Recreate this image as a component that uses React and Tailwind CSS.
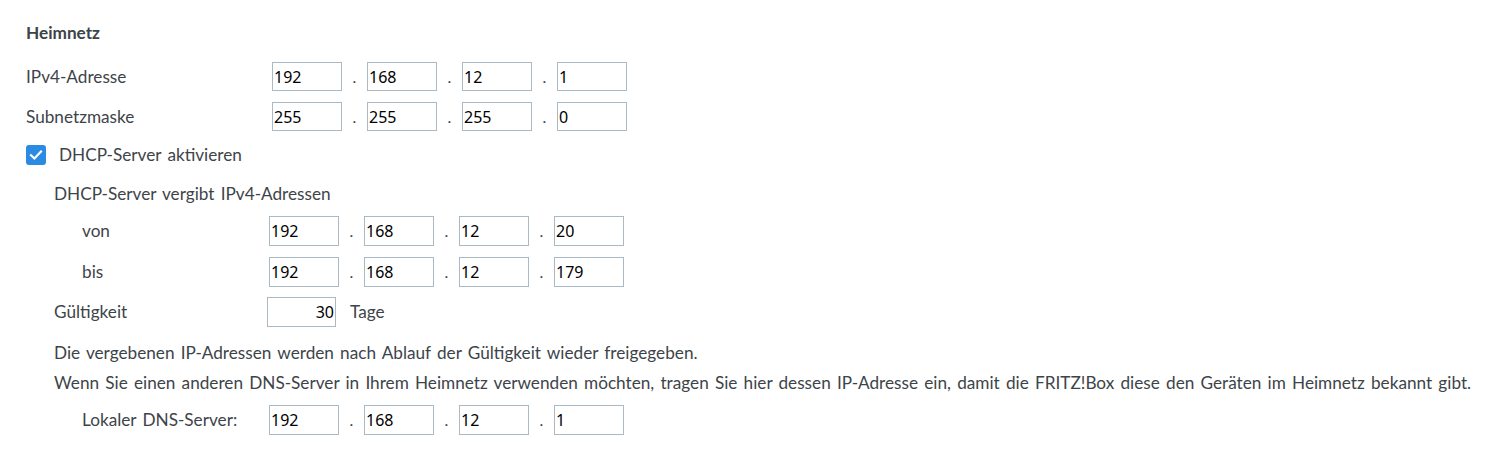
import React from "react";

const labelFont = { fontFamily: "Lato, 'Noto Sans', sans-serif" };

function Octet({ value, align = "left" }) {
  return (
    <input
      readOnly
      value={value}
      className={
        "w-[70px] h-full border border-[#a9bac4] bg-white px-[1px] text-[16px] text-black outline-none font-['Noto_Sans',sans-serif] " +
        (align === "right" ? "text-right" : "text-left")
      }
    />
  );
}

function Dot() {
  return (
    <span className="w-[25px] flex justify-center items-center text-[16px] text-[#3d4449]">.</span>
  );
}

function IpFields({ values }) {
  return (
    <div className="flex h-full">
      {values.map((v, i) => (
        <React.Fragment key={i}>
          {i > 0 && <Dot />}
          <Octet value={v} />
        </React.Fragment>
      ))}
    </div>
  );
}

export default function App() {
  return (
    <div
      className="w-[1485px] h-[454px] bg-white text-[#3d4449] text-[17.2px] [word-spacing:1.8px] px-[26px] pt-[23px] flex flex-col"
      style={labelFont}
    >
      <div className="h-[20px] flex items-center font-bold text-[#3d4449]">Heimnetz</div>

      <div className="mt-[19px] h-[29px] flex items-center">
        <div className="w-[246px]">IPv4-Adresse</div>
        <IpFields values={["192", "168", "12", "1"]} />
      </div>

      <div className="mt-[11px] h-[29px] flex items-center">
        <div className="w-[246px]">Subnetzmaske</div>
        <IpFields values={["255", "255", "255", "0"]} />
      </div>

      <div className="mt-[14px] h-[20px] flex items-center">
        <span className="w-[20px] h-[20px] rounded-[3px] bg-[#2b8be2] flex items-center justify-center">
          <svg width="14" height="14" viewBox="0 0 14 14" fill="none">
            <path d="M2 7.2 L5.4 10.5 L12 3.5" stroke="white" strokeWidth="2.2" strokeLinecap="square" />
          </svg>
        </span>
        <span className="ml-[13px]">DHCP-Server aktivieren</span>
      </div>

      <div className="mt-[19px] h-[20px] flex items-center pl-[28px]">DHCP-Server vergibt IPv4-Adressen</div>

      <div className="mt-[12px] h-[30px] flex items-center pl-[56px]">
        <div className="w-[187px]">von</div>
        <IpFields values={["192", "168", "12", "20"]} />
      </div>

      <div className="mt-[11px] h-[30px] flex items-center pl-[56px]">
        <div className="w-[187px]">bis</div>
        <IpFields values={["192", "168", "12", "179"]} />
      </div>

      <div className="mt-[10px] h-[30px] flex items-center pl-[28px]">
        <div className="w-[213px]">Gültigkeit</div>
        <div className="h-full flex">
          <input
            readOnly
            value="30"
            className="w-[69px] h-full border border-[#a9bac4] bg-white px-[1px] text-[16px] text-black outline-none text-right font-['Noto_Sans',sans-serif]"
          />
        </div>
        <span className="ml-[14px]">Tage</span>
      </div>

      <div className="mt-[16px] h-[20px] flex items-center pl-[28px]">
        Die vergebenen IP-Adressen werden nach Ablauf der Gültigkeit wieder freigegeben.
      </div>
      <div className="mt-[10px] h-[20px] flex items-center pl-[28px] whitespace-nowrap">
        Wenn Sie einen anderen DNS-Server in Ihrem Heimnetz verwenden möchten, tragen Sie hier dessen IP-Adresse ein, damit die FRITZ!Box diese den Geräten im Heimnetz bekannt gibt.
      </div>

      <div className="mt-[12px] h-[30px] flex items-center pl-[56px]">
        <div className="w-[187px]">Lokaler DNS-Server:</div>
        <IpFields values={["192", "168", "12", "1"]} />
      </div>
    </div>
  );
}
